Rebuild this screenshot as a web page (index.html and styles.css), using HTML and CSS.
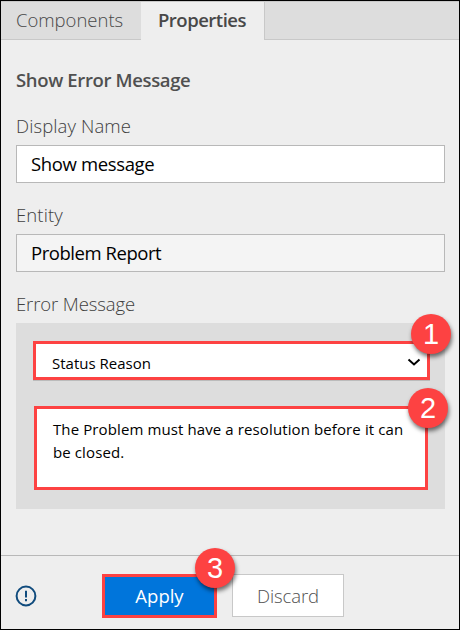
FILE: index.html
```html
<!DOCTYPE html>
<html lang="en">
<head>
<meta charset="utf-8">
<title>Properties</title>
<link rel="stylesheet" href="styles.css">
</head>
<body>
<main class="window">
  <nav class="tabs">
    <div class="tab tab-components"><span>Components</span></div>
    <div class="tab tab-active"><span>Properties</span></div>
    <div class="tab-fill"></div>
  </nav>
  <section class="content">
    <h1 class="heading"><span>Show Error Message</span></h1>
    <div class="label label-name"><span>Display Name</span></div>
    <div class="field field-name"><span>Show message</span></div>
    <div class="label label-entity"><span>Entity</span></div>
    <div class="field field-readonly"><span>Problem Report</span></div>
    <div class="label label-error"><span>Error Message</span></div>
    <div class="panel">
      <div class="select">
        <span>Status Reason</span>
        <svg class="chevron" width="14" height="9" viewBox="0 0 14 9"><path d="M1.5 1.5 L7 6.5 L12.5 1.5"/></svg>
        <b class="badge badge-one">1</b>
      </div>
      <div class="message">
        <span class="line-one">The Problem must have a resolution before it can</span><br>
        <span class="line-two">be closed.</span>
        <b class="badge badge-two">2</b>
      </div>
    </div>
  </section>
  <footer class="footer">
    <svg class="info" width="22" height="22" viewBox="0 0 22 22"><circle cx="11" cy="11" r="9.4"/><path d="M11 5.8V12.4M11 14.1V16.2"/></svg>
    <div class="button apply"><span>Apply</span><b class="badge badge-three">3</b></div>
    <div class="button discard"><span>Discard</span></div>
  </footer>
</main>
</body>
</html>
```
FILE: styles.css
```css
* { box-sizing: border-box; }
body { margin: 0; font-family: "Open Sans", "Noto Sans", sans-serif; font-size: 18px; color: #000; }
.window { width: 460px; height: 630px; border: 1px solid #000; background: #eee; display: flex; flex-direction: column; }
span { white-space: nowrap; }

.tabs { display: flex; height: 39px; border-top: 1px solid #c8c8c8; color: #484848; line-height: 36px; }
.tab { padding-left: 15px; }
.tab-components { width: 140px; background: #ddd; border-bottom: 1px solid #c8c8c8; font-size: 18.5px; font-weight: 330; }
.tab-components span { letter-spacing: -.02px; }
.tab-active { width: 124px; padding-left: 17px; border-right: 1px solid #c8c8c8; font-size: 18.5px; font-weight: 600; }
.tab-active span { letter-spacing: -.5px; }
.tab-fill { flex: 1; background: #ddd; border-bottom: 1px solid #c8c8c8; }

.content { padding: 0 14px 0 15px; height: 515px; }
.heading { margin: 28px 0 0; height: 24px; line-height: 24px; font-size: 18.5px; font-weight: 600; color: #505050; }
.heading span { letter-spacing: -.36px; }
.label { height: 24px; line-height: 24px; color: #404040; font-size: 18.5px; font-weight: 330; letter-spacing: .1px; }
.label-name { margin-top: 22px; }
.label-entity { margin-top: 20px; }
.label-error { margin-top: 20px; }
.label-error span { letter-spacing: -.1px; }
.field { height: 38px; margin-top: 7px; border: 1px solid #b8b8b8; background: #fff; padding-left: 14px; line-height: 36px; font-size: 18.5px; letter-spacing: -.36px; }
.field-readonly { background: #f4f4f4; letter-spacing: -.45px; }
.panel { height: 186px; margin-top: 7px; padding: 18px 15px 0 17px; background: #ddd; }

.select { position: relative; width: 397px; height: 39px; border: 3px solid #fd4242; background: #fff; box-shadow: 0 1px 0 #bbb; display: flex; justify-content: space-between; align-items: center; padding: 5px 6px 0 16px; font-size: 15px; }
.chevron { fill: none; stroke: #000; stroke-width: 2; margin-bottom: 1px; }
.message { position: relative; width: 394px; height: 84px; margin: 26px 0 0 1px; border: 3px solid #fd4242; background: #fff; padding: 9px 0 0 16px; font-size: 15px; line-height: 23px; letter-spacing: .11px; }

.badge { position: absolute; width: 40px; height: 40px; border-radius: 50%; background: #fd4242; color: #fff; font: 29px/40px "Liberation Sans", sans-serif; text-align: center; box-shadow: 1px 3px 4px rgba(0,0,0,.55); }
.badge-one { left: 375px; top: -30px; }
.badge-two { left: 371px; top: -21px; }
.badge-three { left: 90px; top: -29px; }

.footer { flex: 1; display: flex; border-top: 1px solid #b8b8b8; padding: 18px 0 0 14px; }
.info { margin-top: 11px; fill: none; stroke: #104b7d; stroke-width: 2; }
.button { height: 43px; text-align: center; font-size: 18.5px; }
.apply { position: relative; width: 115px; height: 44px; margin-left: 65px; border: 3px solid #fd4242; background: #0075db; color: #fff; line-height: 37px; }
.discard { width: 112px; margin-left: 15px; border: 1px solid #c8c8c8; background: #fff; color: #505050; line-height: 42px; font-weight: 330; letter-spacing: -.1px; }
```
